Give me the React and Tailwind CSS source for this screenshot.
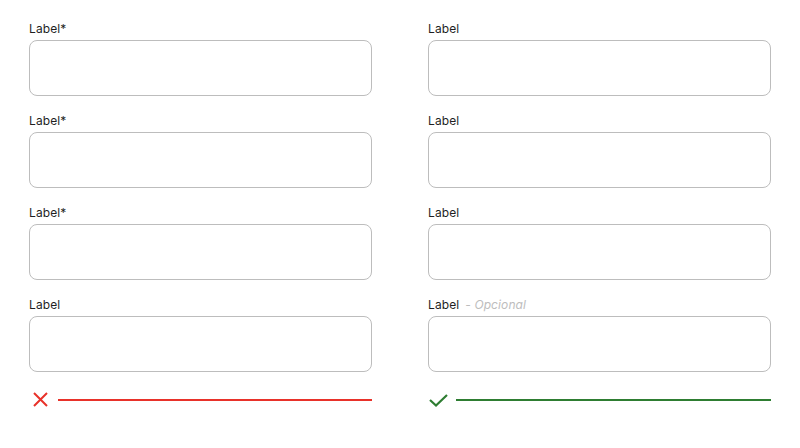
import React from 'react';

function Field({ label, required, optional }) {
  return (
    <div className="flex flex-col gap-1">
      <label className="h-4 leading-[17px] text-[12px] tracking-[0.1px] text-[#1f1f1f]">
        {label}
        {required && '*'}
        {optional && <span className="ml-[6px] italic text-[#bdbdbd]">- Opcional</span>}
      </label>
      <div className="h-[56px] rounded-lg border border-[#bdbdbd] bg-white" />
    </div>
  );
}

function Column({ fields, status }) {
  return (
    <div className="flex flex-col w-[343px]">
      <div className="flex flex-col gap-4">
        {fields.map((f, i) => (
          <Field key={i} {...f} />
        ))}
      </div>
      {status === 'bad' ? (
        <div className="flex items-center gap-2 mt-5 h-4">
          <svg width="20" height="20" viewBox="0 0 20 20" className="ml-[1px]">
            <path d="M4 3 L17 16 M17 3 L4 16" stroke="#e8322a" strokeWidth="2" fill="none" />
          </svg>
          <div className="flex-1 h-[2px] bg-[#e8322a]" />
        </div>
      ) : (
        <div className="flex items-center gap-[6px] mt-5 h-4">
          <svg width="22" height="20" viewBox="0 0 22 20">
            <path d="M2 10 L8 15.5 L19 5" stroke="#2e7d32" strokeWidth="2.2" fill="none" />
          </svg>
          <div className="flex-1 h-[2px] bg-[#2e7d32]" />
        </div>
      )}
    </div>
  );
}

export default function App() {
  return (
    <div className="w-[800px] h-[448px] bg-white pt-5 pl-[29px] flex gap-[56px]" style={{ fontFamily: 'Inter, "Noto Sans", sans-serif' }}>
      <Column
        status="bad"
        fields={[
          { label: 'Label', required: true },
          { label: 'Label', required: true },
          { label: 'Label', required: true },
          { label: 'Label' },
        ]}
      />
      <Column
        status="good"
        fields={[
          { label: 'Label' },
          { label: 'Label' },
          { label: 'Label' },
          { label: 'Label', optional: true },
        ]}
      />
    </div>
  );
}
